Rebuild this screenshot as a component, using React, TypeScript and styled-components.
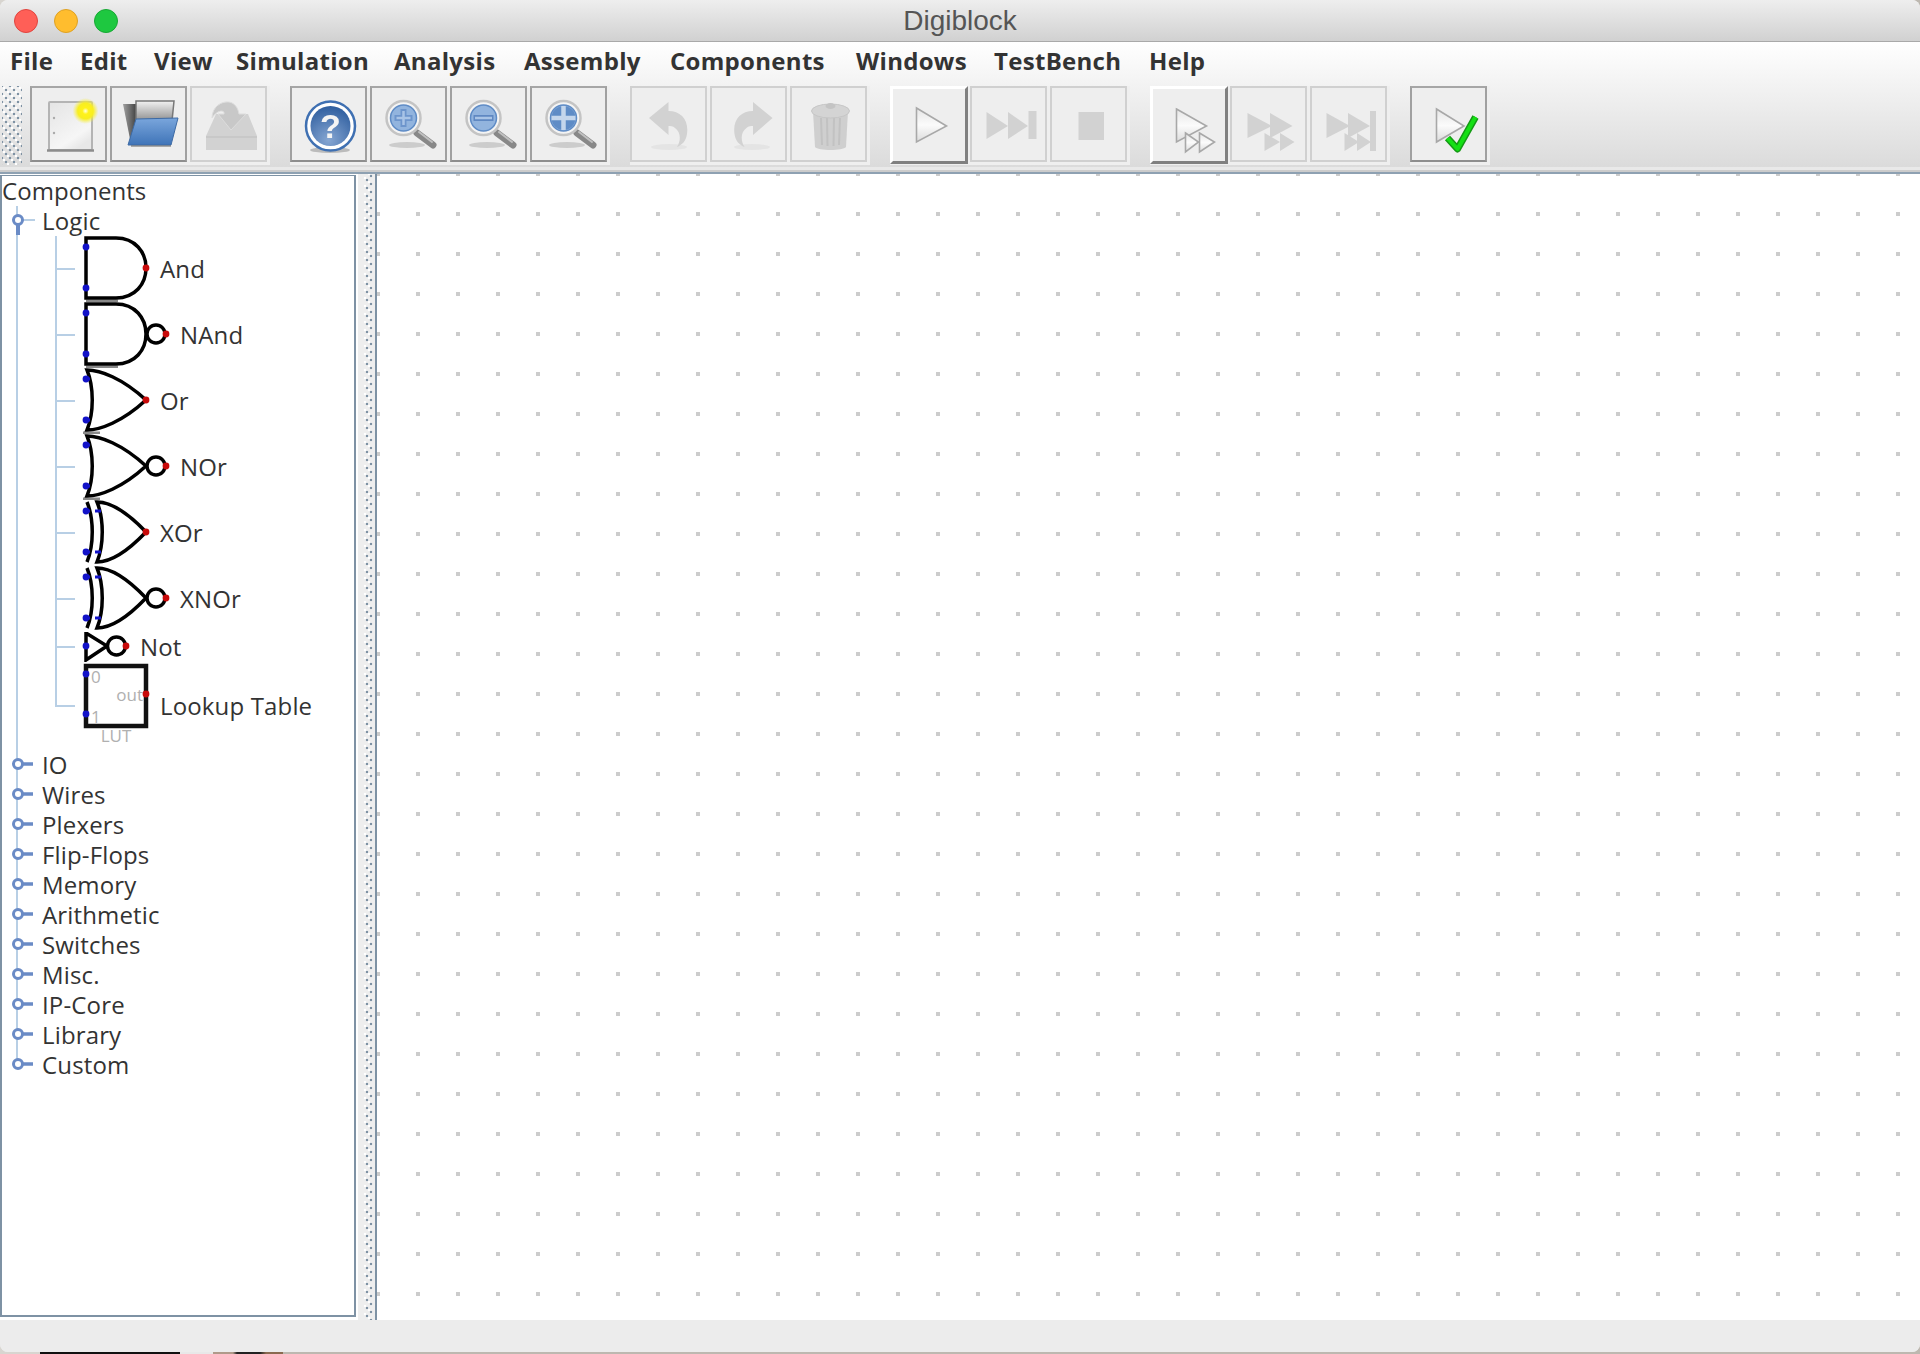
import * as React from 'react';
import styled, { createGlobalStyle } from 'styled-components';

const BLUE = '#1212c8';
const RED = '#c80a0a';
const OFF = '#d2d2d2';
const BRANCH = '#b8cfe5';
const GRIP = '#7e92a4';

const GlobalStyle = createGlobalStyle`
  html, body {
    margin: 0;
    padding: 0;
    height: 100%;
    overflow: hidden;
  }
  body {
    background: linear-gradient(
      to right,
      #d8d5d0 40px,
      #111 40px 180px,
      #e8e8e8 180px 213px,
      #b09a8a 213px 233px,
      #222 237px 260px,
      #8a6a50 266px 283px,
      #bdb8b0 283px
    );
  }
`;

const Dots = `
  background-color: #eeeeee;
  background-image:
    radial-gradient(circle at center, ${GRIP} 1.3px, transparent 1.6px),
    radial-gradient(circle at center, ${GRIP} 1.3px, transparent 1.6px),
    radial-gradient(circle at center, #ffffff 1.3px, transparent 1.6px),
    radial-gradient(circle at center, #ffffff 1.3px, transparent 1.6px);
  background-size: 8px 8px;
`;

const Window = styled.div`
  width: 1920px;
  height: 1352px;
  display: flex;
  flex-direction: column;
  background: #ececec;
  border-radius: 8px;
  overflow: hidden;
`;

const TitleBar = styled.div`
  height: 41px;
  display: flex;
  align-items: center;
  gap: 16px;
  padding-left: 14px;
  background: linear-gradient(#eeeeee, #d1d1d1);
  border-bottom: 1px solid #a9a9a9;
`;

const Light = styled.span<{ $color: string; $edge: string }>`
  width: 24px;
  height: 24px;
  box-sizing: border-box;
  border-radius: 50%;
  background: ${(p) => p.$color};
  border: 1px solid ${(p) => p.$edge};
`;

const Title = styled.div`
  flex: 1;
  margin-left: -16px;
  padding-right: 118px;
  text-align: center;
  font: 28px 'Liberation Sans', sans-serif;
  color: #555555;
`;

const Chrome = styled.div`
  background: linear-gradient(#ffffff, #dbdbdb);
`;

const MenuBar = styled.div`
  height: 36px;
  padding: 0 0 2px 10px;
  display: flex;
  align-items: center;
`;

const MenuItem = styled.span<{ $width: number }>`
  width: ${(p) => p.$width}px;
  font: 700 24px 'Open Sans', sans-serif;
  letter-spacing: 0.3px;
  color: #333333;
`;

const ToolBar = styled.div`
  height: 81px;
  padding: 6px 0 0 2px;
  display: flex;
  align-items: flex-start;
`;

const Gripper = styled.div`
  ${Dots}
  background-color: transparent;
  width: 20px;
  height: 79px;
  margin-right: 8px;
  background-position: 0 0, 4px 4px, 2px 2px, 6px 6px;
`;

const Group = styled.div`
  display: flex;
  gap: 3px;
  height: 76px;
  padding: 0 3px 3px 0;
  margin-right: 20px;
  background: #efefef;
`;

const ToolButton = styled.div<{ $look: 'flat' | 'off' | 'raised' }>`
  width: ${(p) => (p.$look === 'raised' ? 78 : 77)}px;
  height: ${(p) => (p.$look === 'raised' ? 78 : 76)}px;
  margin-right: ${(p) => (p.$look === 'raised' ? -1 : 0)}px;
  box-sizing: border-box;
  display: flex;
  align-items: center;
  justify-content: center;
  background: #eeeeee;
  border-style: solid;
  border-width: ${(p) => (p.$look === 'raised' ? 3 : 2)}px;
  border-color: ${(p) =>
    p.$look === 'raised'
      ? '#ffffff #808080 #808080 #ffffff'
      : p.$look === 'flat'
        ? '#a6a6a6 #a0a0a0 #8e8e8e #a0a0a0'
        : '#d0d0d0'};
  padding-bottom: ${(p) => (p.$look === 'raised' ? 2 : 0)}px;

  svg {
    flex: none;
    width: 60px;
    height: 60px;
    filter: blur(0.5px);
  }
`;

const Strip = styled.div`
  height: 5px;
  background: linear-gradient(#e9e9e9 60%, #cccccc 60%);
`;

const Main = styled.div`
  flex: 1;
  min-height: 0;
  display: flex;
  border-top: 2px solid #8ea1b2;
`;

const LeftPane = styled.div`
  width: 358px;
  box-sizing: border-box;
  padding: 1px 2px 3px 0;
  background: #ffffff;
  display: flex;
`;

const Tree = styled.div`
  flex: 1;
  box-sizing: border-box;
  border: 2px solid ${GRIP};
  border-top-width: 1px;
  font: 24px 'Open Sans', sans-serif;
  color: #333333;
`;

const RootRow = styled.div`
  height: 30px;
  padding-left: 0;
  line-height: 30px;
  letter-spacing: 0.05px;
`;

const RootList = styled.div`
  background: linear-gradient(${BRANCH}, ${BRANCH}) 14px 0 / 2px calc(100% - 15px) no-repeat;
`;

const Branch = styled.div`
  height: 30px;
  display: flex;
  align-items: center;

  svg {
    flex: none;
    margin-right: 4px;
  }
`;

const BranchLabel = styled.span`
  margin-bottom: 2px;
  letter-spacing: 0.15px;
`;

const GateRow = styled.div<{ $height: number }>`
  height: ${(p) => p.$height}px;
  padding-left: 53px;
  display: flex;
  align-items: center;
`;

const Elbow = styled.div<{ $last?: boolean }>`
  flex: none;
  align-self: stretch;
  width: 20px;
  margin-right: 5px;
  background:
    linear-gradient(${BRANCH}, ${BRANCH}) 0 0 / 2px ${(p) => (p.$last ? 'calc(50% + 1px)' : '100%')} no-repeat,
    linear-gradient(${BRANCH}, ${BRANCH}) 0 50% / 20px 2px no-repeat;
`;

const GateIcon = styled.svg`
  flex: none;
  display: block;
`;

const GateLabel = styled.span<{ $gap: number }>`
  margin: 0 0 2px ${(p) => p.$gap}px;
  letter-spacing: 0.15px;
`;

const Splitter = styled.div`
  ${Dots}
  width: 17px;
  background-repeat: repeat-y;
  background-size: 8px 8px;
  background-position: 5px 2px, 9px 6px, 3px 0, 7px 4px;
`;

const Canvas = styled.div`
  flex: 1;
  border-left: 2px solid ${GRIP};
  background-color: #cccccc;
  background-image:
    linear-gradient(to right, transparent 4px, #ffffff 4px),
    linear-gradient(to bottom, transparent 4px, #ffffff 4px);
  background-size: 40px 40px;
  background-position: 39px 38px;
`;

const StatusBar = styled.div`
  height: 32px;
  background: #ececec;
`;

const NewIcon = () => (
  <svg viewBox="0 0 60 60">
    <defs>
      <linearGradient id="page" x1="0" y1="0" x2="0.6" y2="1">
        <stop offset="0" stopColor="#e4e4e4" />
        <stop offset="0.8" stopColor="#f6f6f6" />
        <stop offset="1" stopColor="#e8e8e8" />
      </linearGradient>
      <radialGradient id="star">
        <stop offset="0" stopColor="#ffffe8" />
        <stop offset="0.25" stopColor="#fff21a" />
        <stop offset="0.6" stopColor="#f8ee20" />
        <stop offset="1" stopColor="#f6ee50" stopOpacity="0" />
      </radialGradient>
    </defs>
    <rect x="10" y="8" width="43" height="48" rx="1" fill="url(#page)" stroke="#b4b4b4" strokeWidth="2" />
    <path d="M8 56.5h47" stroke="#8c8c8c" strokeWidth="2.5" />
    <circle cx="15" cy="24" r="1.2" fill="#aaaaaa" />
    <circle cx="15" cy="39" r="1.2" fill="#aaaaaa" />
    <circle cx="46.5" cy="17" r="13" fill="url(#star)" />
  </svg>
);

const OpenIcon = () => (
  <svg viewBox="0 0 60 60">
    <defs>
      <linearGradient id="folder" x1="0" y1="0" x2="0" y2="1">
        <stop offset="0" stopColor="#7aa6dc" />
        <stop offset="1" stopColor="#3f74b8" />
      </linearGradient>
      <linearGradient id="paper" x1="0" y1="0" x2="0" y2="1">
        <stop offset="0" stopColor="#f2f2f2" />
        <stop offset="1" stopColor="#8f8f8f" />
      </linearGradient>
      <linearGradient id="back" x1="0" y1="0" x2="1" y2="0">
        <stop offset="0" stopColor="#a0a0a0" />
        <stop offset="1" stopColor="#444444" />
      </linearGradient>
    </defs>
    <path d="M4 10h13v40H12z" fill="url(#back)" />
    <path d="M17 7h38l-2 20H17z" fill="url(#paper)" stroke="#777777" strokeWidth="1.5" />
    <path d="M17 25l42-1-7 27H9z" fill="url(#folder)" stroke="#3d6aa4" strokeWidth="1" />
    <path d="M12 52h40" stroke="#555555" strokeWidth="1.5" opacity="0.6" />
  </svg>
);

const SaveIcon = () => (
  <svg viewBox="0 0 60 60">
    <path d="M17 20h32l9 22v14H7V42z" fill={OFF} />
    <path d="M13 24C13 13 22 7 30 8c6 1 9 6 10 12h7L32 36 19 20h6c1-4-6-5-12 4z" fill="#c8c8c8" stroke="#dddddd" strokeWidth="1" />
    <path d="M7 43h51" stroke="#c4c4c4" strokeWidth="1.5" />
  </svg>
);

const HelpIcon = () => (
  <svg viewBox="0 0 60 60">
    <defs>
      <radialGradient id="help" cx="0.45" cy="0.85" r="0.9">
        <stop offset="0" stopColor="#86a6d2" />
        <stop offset="1" stopColor="#2a5a9c" />
      </radialGradient>
    </defs>
    <ellipse cx="31" cy="56" rx="20" ry="3" fill="#bbbbbb" />
    <circle cx="31.5" cy="32" r="24.5" fill="#ffffff" stroke="#3f70b2" strokeWidth="2.5" />
    <circle cx="31.5" cy="32" r="20" fill="url(#help)" />
    <text x="31.5" y="44" textAnchor="middle" fontFamily="'Liberation Sans', sans-serif" fontWeight="700" fontSize="34" fill="#f4f4f4">?</text>
  </svg>
);

const Lens = ({ children }: { children: React.ReactNode }) => (
  <svg viewBox="0 0 60 60">
    <ellipse cx="28" cy="51" rx="18" ry="3" fill="#cccccc" />
    <path d="M38 39l16 12" stroke="#888888" strokeWidth="7" strokeLinecap="round" />
    <path d="M40 38l13 10" stroke="#c0c0c0" strokeWidth="2" strokeLinecap="round" />
    <circle cx="24.5" cy="24" r="17" fill="#f4f4f4" stroke="#c4c4c4" strokeWidth="2.5" />
    <circle cx="24.5" cy="24" r="13" fill="#92b4de" stroke="#5f8cc6" strokeWidth="1.5" />
    {children}
  </svg>
);

const ZoomInIcon = () => (
  <Lens>
    <path d="M24.5 15v18M15.5 24h18" stroke="#6d95cc" strokeWidth="6" />
    <path d="M24.5 17v14M17.5 24h14" stroke="#a9c4e6" strokeWidth="2.5" />
  </Lens>
);

const ZoomOutIcon = () => (
  <Lens>
    <path d="M14.5 24h20" stroke="#5f88c2" strokeWidth="6" />
    <path d="M16 24h17" stroke="#a9c4e6" strokeWidth="2.5" />
  </Lens>
);

const ZoomFitIcon = () => (
  <Lens>
    <circle cx="24.5" cy="24" r="12" fill="#5f8cc6" />
    <path d="M24.5 12v24M12.5 24h24" stroke="#c4d6ec" strokeWidth="4.5" />
  </Lens>
);

const UndoShape = 'M10 24L29.5 8v9C42 17 50 26 48 40c-1 7-5 11-10 13 4-6 4-15-2-19-2-2-5-2-6.5-2v9z';

const UndoIcon = () => (
  <svg viewBox="0 0 60 60">
    <ellipse cx="30" cy="53" rx="18" ry="3" fill="#e4e4e4" />
    <path d={UndoShape} fill={OFF} />
  </svg>
);

const RedoIcon = () => (
  <svg viewBox="0 0 60 60">
    <ellipse cx="33" cy="53" rx="18" ry="3" fill="#e4e4e4" />
    <path d={UndoShape} fill={OFF} transform="matrix(-1 0 0 1 63.5 0)" />
  </svg>
);

const TrashIcon = () => (
  <svg viewBox="0 0 60 60">
    <path d="M14 17h35l-2 36c-3 4-28 4-31 0z" fill="#cfcfcf" />
    <path d="M22 24l1 27M28 24l.5 28M35 24l-.5 28M41 24l-1 27" stroke="#c2c2c2" strokeWidth="2" />
    <ellipse cx="31.5" cy="17" rx="19" ry="7" fill="#d4d4d4" stroke="#c6c6c6" />
    <ellipse cx="31.5" cy="12" rx="5" ry="3" fill="#c4c4c4" />
  </svg>
);

const Outline = ({ points }: { points: string }) => (
  <polygon points={points} fill="url(#glass)" stroke="#a8a8a8" strokeWidth="1.6" />
);

const Glass = () => (
  <defs>
    <linearGradient id="glass" x1="0" y1="0" x2="0" y2="1">
      <stop offset="0" stopColor="#e6e6e6" />
      <stop offset="0.5" stopColor="#fbfbfb" />
      <stop offset="1" stopColor="#dcdcdc" />
    </linearGradient>
  </defs>
);

const PlayIcon = () => (
  <svg viewBox="0 0 60 60">
    <Glass />
    <Outline points="17.5,14 47.5,32 17.5,48" />
  </svg>
);

const StepIcon = () => (
  <svg viewBox="0 0 60 60" fill={OFF}>
    <polygon points="7.5,18 29,32 7.5,45" />
    <polygon points="29,18 49,32 29,45" />
    <rect x="49.5" y="17" width="8" height="28" />
  </svg>
);

const StopIcon = () => (
  <svg viewBox="0 0 60 60" fill={OFF}>
    <rect x="19.5" y="18" width="25.5" height="28" />
  </svg>
);

const RunFastIcon = () => (
  <svg viewBox="0 0 60 60">
    <Glass />
    <Outline points="17.5,15 47.5,32 17.5,48" />
    <Outline points="26.5,39 39.5,48 26.5,58" />
    <Outline points="40.5,39 55.5,48 40.5,58" />
  </svg>
);

const FastIcon = () => (
  <svg viewBox="0 0 60 60" fill={OFF}>
    <polygon points="8.5,19 33,32 8.5,44" />
    <polygon points="31,19 53.5,32 31,44" />
    <polygon points="25.5,39 41,48 25.5,57" />
    <polygon points="41,39 55.5,48 41,57" />
  </svg>
);

const FastEndIcon = () => (
  <svg viewBox="0 0 60 60" fill={OFF}>
    <polygon points="7.5,19 31,32 7.5,44" />
    <polygon points="29,19 51,32 29,44" />
    <rect x="51" y="17" width="6" height="40" />
    <polygon points="25.5,39 40,48 25.5,57" />
    <polygon points="38,39 52,48 38,57" />
  </svg>
);

const CheckIcon = () => (
  <svg viewBox="0 0 60 60">
    <Glass />
    <Outline points="17.5,15 45,32 17.5,48" />
    <path d="M28.5 44l10 11 18-32" fill="none" stroke="#159a15" strokeWidth="7" strokeLinejoin="round" />
    <path d="M28.5 44l10 11 18-32" fill="none" stroke="#14e014" strokeWidth="4" strokeLinejoin="round" />
  </svg>
);

const toolGroups: { look: 'flat' | 'off' | 'raised'; icon: React.ReactNode }[][] = [
  [
    { look: 'flat', icon: <NewIcon /> },
    { look: 'flat', icon: <OpenIcon /> },
    { look: 'off', icon: <SaveIcon /> },
  ],
  [
    { look: 'flat', icon: <HelpIcon /> },
    { look: 'flat', icon: <ZoomInIcon /> },
    { look: 'flat', icon: <ZoomOutIcon /> },
    { look: 'flat', icon: <ZoomFitIcon /> },
  ],
  [
    { look: 'off', icon: <UndoIcon /> },
    { look: 'off', icon: <RedoIcon /> },
    { look: 'off', icon: <TrashIcon /> },
  ],
  [
    { look: 'raised', icon: <PlayIcon /> },
    { look: 'off', icon: <StepIcon /> },
    { look: 'off', icon: <StopIcon /> },
  ],
  [
    { look: 'raised', icon: <RunFastIcon /> },
    { look: 'off', icon: <FastIcon /> },
    { look: 'off', icon: <FastEndIcon /> },
  ],
  [{ look: 'flat', icon: <CheckIcon /> }],
];

const menus: [string, number][] = [
  ['File', 70],
  ['Edit', 74],
  ['View', 82],
  ['Simulation', 158],
  ['Analysis', 130],
  ['Assembly', 146],
  ['Components', 186],
  ['Windows', 138],
  ['TestBench', 155],
  ['Help', 70],
];

const Pin = ({ x, y, out }: { x: number; y: number; out?: boolean }) => (
  <circle cx={x} cy={y} r="3.4" fill={out ? RED : BLUE} />
);

const Bar = ({ x, y }: { x: number; y: number }) => <path d={`M${x} ${y}h6`} stroke={BLUE} strokeWidth="3" />;

const Bubble = ({ x, y }: { x: number; y: number }) => (
  <circle cx={x} cy={y} r="9" fill="#ffffff" stroke="#000000" strokeWidth="3.5" />
);

const AndBody = () => (
  <>
    <rect x="6" y="63.5" width="32" height="3" fill="#888888" />
    <path d="M6 2H36C55 2 66 16 66 32C66 48 55 62 36 62H6Z" fill="#ffffff" stroke="#000000" strokeWidth="3.5" />
    <Pin x={6} y={11} />
    <Pin x={6} y={52} />
  </>
);

const OrBody = () => (
  <>
    <rect x="3" y="63.5" width="17" height="3" fill="#888888" />
    <path d="M7 2C20 2 42 10 66 32C42 54 20 62 7 62C14 45 14 19 7 2Z" fill="#ffffff" stroke="#000000" strokeWidth="3.5" />
    <Pin x={6} y={11} />
    <Pin x={6} y={52} />
    <Bar x={4} y={11} />
    <Bar x={4} y={52} />
  </>
);

const XorBody = () => (
  <>
    <path d="M17 2C28 2 45 10 66 32C45 54 28 62 17 62C24 45 24 19 17 2Z" fill="#ffffff" stroke="#000000" strokeWidth="3.5" />
    <path d="M7 2C14 19 14 45 7 62" fill="none" stroke="#000000" strokeWidth="3.5" />
    <Pin x={6} y={11} />
    <Pin x={6} y={52} />
    <Bar x={4} y={11} />
    <Bar x={4} y={52} />
    <Bar x={15} y={11} />
    <Bar x={15} y={52} />
  </>
);

const gates: { label: string; height: number; width: number; gap: number; art: React.ReactNode }[] = [
  { label: 'And', height: 66, width: 70, gap: 10, art: <><AndBody /><Pin x={66} y={32} out /></> },
  { label: 'NAnd', height: 66, width: 90, gap: 10, art: <><AndBody /><Bubble x={76} y={32} /><Pin x={86} y={32} out /></> },
  { label: 'Or', height: 66, width: 70, gap: 10, art: <><OrBody /><Pin x={66} y={32} out /></> },
  { label: 'NOr', height: 66, width: 90, gap: 10, art: <><OrBody /><Bubble x={76} y={32} /><Pin x={86} y={32} out /></> },
  { label: 'XOr', height: 66, width: 70, gap: 10, art: <><XorBody /><Pin x={66} y={32} out /></> },
  { label: 'XNOr', height: 66, width: 90, gap: 10, art: <><XorBody /><Bubble x={76} y={32} /><Pin x={86} y={32} out /></> },
  {
    label: 'Not',
    height: 30,
    width: 50,
    gap: 10,
    art: (
      <>
        <path d="M6 1L27 14L6 28Z" fill="#ffffff" stroke="#000000" strokeWidth="3.5" />
        <Bubble x={36.5} y={14} />
        <Pin x={6} y={14} />
        <Pin x={46} y={14} out />
      </>
    ),
  },
  {
    label: 'Lookup Table',
    height: 88,
    width: 70,
    gap: 10,
    art: (
      <>
        <rect x="6" y="4" width="60" height="60" fill="#ffffff" stroke="#111111" strokeWidth="4.5" />
        <g fontFamily="'Open Sans', sans-serif" fontSize="17" fill="#b0b0b0">
          <text x="11" y="21">0</text>
          <text x="11" y="61">1</text>
          <text x="63" y="39" textAnchor="end">out</text>
          <text x="36" y="80" textAnchor="middle">LUT</text>
        </g>
        <Pin x={6} y={12} />
        <Pin x={6} y={52} />
        <Pin x={66} y={32} out />
      </>
    ),
  },
];

const folders = ['IO', 'Wires', 'Plexers', 'Flip-Flops', 'Memory', 'Arithmetic', 'Switches', 'Misc.', 'IP-Core', 'Library', 'Custom'];

const Handle = ({ open }: { open?: boolean }) => (
  <svg width="36" height="30" viewBox="0 0 36 30">
    {open ? (
      <>
        <path d="M20 14h13" stroke={BRANCH} strokeWidth="2" />
        <path d="M16 18v11" stroke="#6a8bc6" strokeWidth="4" />
      </>
    ) : (
      <path d="M20 14h11" stroke="#6a8bc6" strokeWidth="3.5" />
    )}
    <circle cx="16" cy="14" r="4.5" fill="#ffffff" stroke="#6a8bc6" strokeWidth="3" />
  </svg>
);

const App = () => (
  <>
    <GlobalStyle />
    <Window>
      <TitleBar>
        <Light $color="#ff5f57" $edge="#e0443e" />
        <Light $color="#ffbd2e" $edge="#dea123" />
        <Light $color="#1ec840" $edge="#17a834" />
        <Title>Digiblock</Title>
      </TitleBar>
      <Chrome>
        <MenuBar>
          {menus.map(([label, width]) => (
            <MenuItem key={label} $width={width}>
              {label}
            </MenuItem>
          ))}
        </MenuBar>
        <ToolBar>
          <Gripper />
          {toolGroups.map((group, i) => (
            <Group key={i}>
              {group.map((tool, j) => (
                <ToolButton key={j} $look={tool.look}>
                  {tool.icon}
                </ToolButton>
              ))}
            </Group>
          ))}
        </ToolBar>
      </Chrome>
      <Strip />
      <Main>
        <LeftPane>
          <Tree>
            <RootRow>Components</RootRow>
            <RootList>
              <Branch>
                <Handle open />
                <BranchLabel>Logic</BranchLabel>
              </Branch>
              {gates.map((gate, i) => (
                <GateRow key={gate.label} $height={gate.height}>
                  <Elbow $last={i === gates.length - 1} />
                  <GateIcon width={gate.width} height={gate.height} viewBox={`0 0 ${gate.width} ${gate.height}`}>
                    {gate.art}
                  </GateIcon>
                  <GateLabel $gap={gate.gap}>{gate.label}</GateLabel>
                </GateRow>
              ))}
              {folders.map((name) => (
                <Branch key={name}>
                  <Handle />
                  <BranchLabel>{name}</BranchLabel>
                </Branch>
              ))}
            </RootList>
          </Tree>
        </LeftPane>
        <Splitter />
        <Canvas />
      </Main>
      <StatusBar />
    </Window>
  </>
);

export default App;
